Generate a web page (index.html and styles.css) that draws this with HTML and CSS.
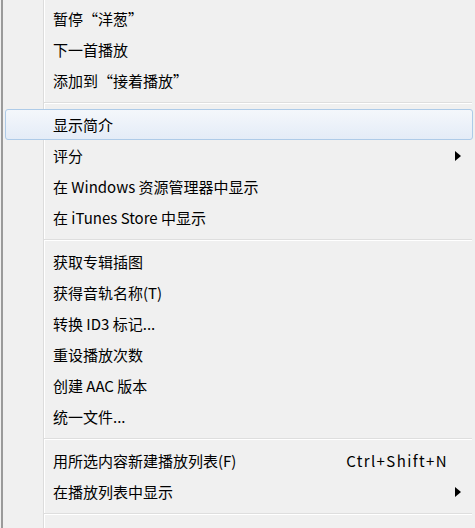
FILE: index.html
```html
<!DOCTYPE html>
<html lang="zh-CN">

<head>
  <meta charset="UTF-8">
  <meta name="viewport" content="width=device-width, initial-scale=1.0">
  <title>Context Menu</title>
  <link rel="stylesheet" href="styles.css">
</head>

<body>
  <div class="menu">
    <div class="item"><span class="label">暂停“洋葱”</span></div>
    <div class="item"><span class="label">下一首播放</span></div>
    <div class="item"><span class="label">添加到“接着播放”</span></div>
    <div class="sep"></div>
    <div class="item active"><span class="label">显示简介</span></div>
    <div class="item">
      <span class="label">评分</span>
      <span class="sub"><svg width="6" height="10" viewBox="0 0 6 10"><polygon points="0,0 6,5 0,10" fill="#000"/></svg></span>
    </div>
    <div class="item"><span class="label">在 Windows 资源管理器中显示</span></div>
    <div class="item"><span class="label">在 iTunes Store 中显示</span></div>
    <div class="sep"></div>
    <div class="item"><span class="label">获取专辑插图</span></div>
    <div class="item"><span class="label">获得音轨名称(T)</span></div>
    <div class="item"><span class="label">转换 ID3 标记...</span></div>
    <div class="item"><span class="label">重设播放次数</span></div>
    <div class="item"><span class="label">创建 AAC 版本</span></div>
    <div class="item"><span class="label">统一文件...</span></div>
    <div class="sep"></div>
    <div class="item">
      <span class="label">用所选内容新建播放列表(F)</span>
      <span class="accel">Ctrl+Shift+N</span>
    </div>
    <div class="item">
      <span class="label">在播放列表中显示</span>
      <span class="sub"><svg width="6" height="10" viewBox="0 0 6 10"><polygon points="0,0 6,5 0,10" fill="#000"/></svg></span>
    </div>
    <div class="sep"></div>
    <div class="item"><span class="label"></span></div>
  </div>
</body>
</html>
```

FILE: styles.css
```css
body {
  margin: 0;
  background-color: #f0f0f0;
  overflow: hidden;
}
.menu {
  height: 528px;
  border-left: 2px solid #9a9a9a;
  margin-left: 1px;
  padding: 3px 0 0 0;
  background:
    linear-gradient(to right, transparent 40px, #dcdcdc 40px, #dcdcdc 41px, #ffffff 41px, #ffffff 42px, transparent 42px),
    #f0f0f0;
  font-family: "Noto Sans CJK SC", "Microsoft YaHei", sans-serif;
  font-size: 15px;
  color: #000;
}
.item {
  display: flex;
  align-items: center;
  height: 31px;
  margin: 0 2px 0 2px;
  padding-left: 47px;
  box-sizing: border-box;
  border: 1px solid transparent;
  border-radius: 3px;
  line-height: 1;
}
.item.active {
  border-color: #aecbe8;
  background: linear-gradient(to bottom, #f4f7fb, #e4ecf7);
}
.label {
  flex: 1;
  white-space: nowrap;
}
.accel {
  padding-right: 24px;
  letter-spacing: 1.4px;
}
.sub {
  display: flex;
  justify-content: flex-end;
  width: 26px;
  padding-right: 11px;
  box-sizing: border-box;
}
.sep {
  height: 13px;
  margin: 0 3px 0 41px;
  background: linear-gradient(to bottom, transparent 6px, #dedede 6px, #dedede 7px, #ffffff 7px, #ffffff 8px, transparent 8px);
}
```
